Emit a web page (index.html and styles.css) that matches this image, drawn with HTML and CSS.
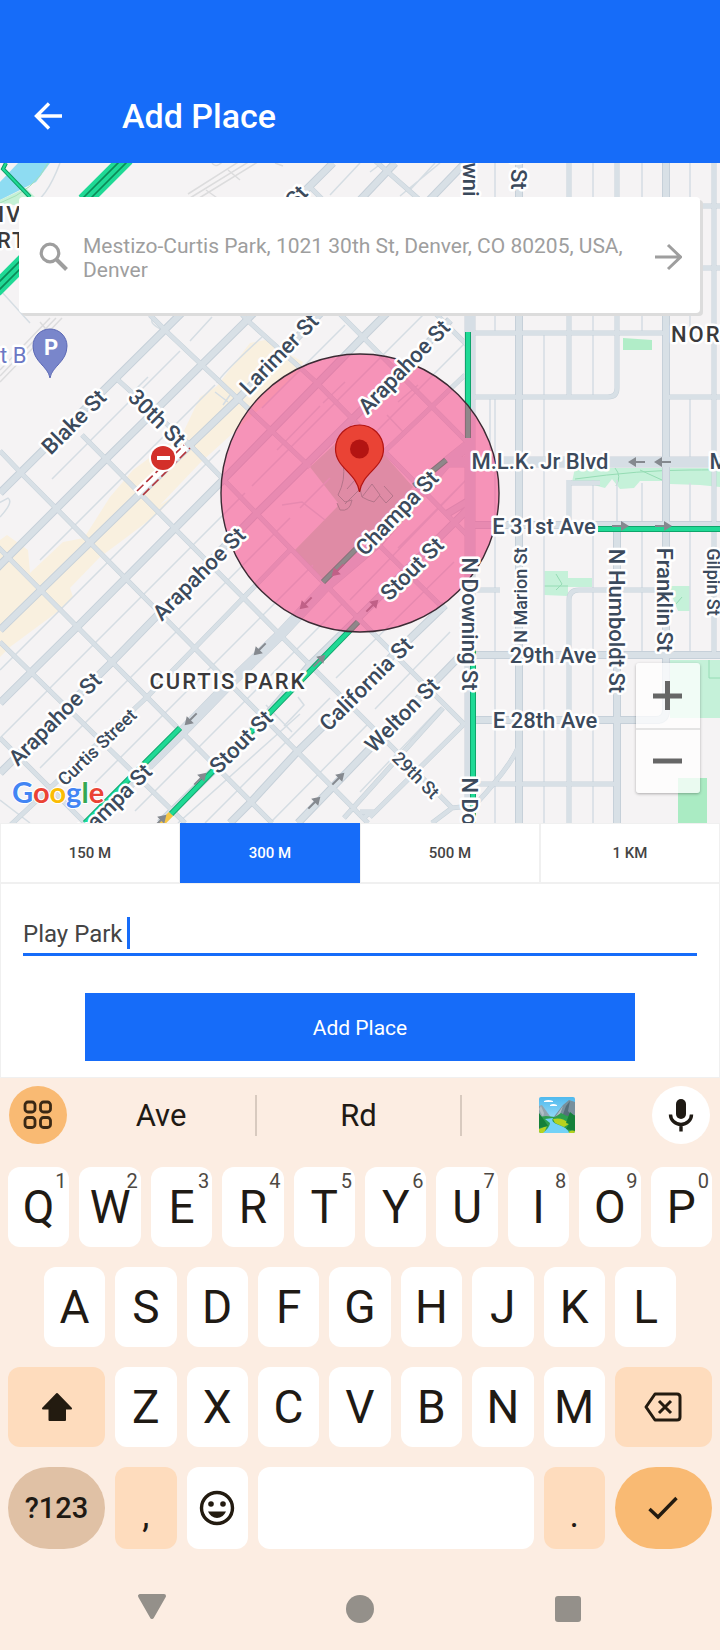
FILE: index.html
```
<!DOCTYPE html>
<html lang="en">
<head>
    <meta charset="UTF-8">
    <meta name="viewport" content="width=device-width, initial-scale=1.0">
    <title>Add Place</title>
    <link rel="stylesheet" href="styles.css">
</head>
<body>
    <header class="app-bar">
        <button class="icon-button" type="button" aria-label="Back">
            <svg width="28" height="28" viewBox="0 0 28 28" fill="none" stroke="#fff" stroke-width="3.4"><path d="M28 14H3M15 1.5 2.5 14 15 26.5"/></svg>
        </button>
        <h1>Add Place</h1>
    </header>

    <main>
        <section class="map" aria-label="Map">
            <svg class="map-canvas" viewBox="0 163 720 660" preserveAspectRatio="xMidYMid slice">
                <defs>
                    <path id="alleys" d="M52 479 180 351M190 341 212 317M40 560 215 385M217 383 Q220 376 262 337M0 670 220 450M262 408 345 325M0 738 245 493M252 486 432 306M40 768 290 518M300 508 330 478M375 433 467 341M95 783 313 565M350 600 467 479M135 811 345 601M398 548 467 479M178 823 300 714M336 678 454 562M205 823 330 698M375 709 450 632M270 823 367 725M360 792 440 708M-5 505 8 498 Q14 502 0 517M290 720 304 705 298 697M304 705 284 726M266 705 292 732M152 320 Q150 325 167 332M215 392 228 402M223 405 230 395M130 395 148 377M277 450 320 406M323 403 345 382M282 505 302 502 325 520M387 415 405 434M418 385 398 402M495 163V333M495 397V823M544 333V823M593 163V333M593 333V397M593 480V823M642 163V333M642 483V655M690 397V460M690 483V655M690 163V333M490 397V462M617 480V525M569 163V190M60 163 Q46 200 30 205M0 290 30 323M410 190 435 163M400 196 440 163M370 172 382 163M330 195 360 163M0 800 30 823"/>
                    <path id="streets" d="M-10 539 272 823M0 451 23 475 368 823M82 435 310 665 400 755 452 808 480 805M118 380 190 445 358 618 465 725M167 332 310 467M377 543 445 610M150 315 167 332M247 320 317 383 467 535M240 312 247 320M340 314 467 442M310 187 330 207M372 158 422 202M0 642 185 823M0 738 85 823M0 835 147 697 290 550M383 453 465 375M344 818 443 708M370 817 463 725M360 812H370L362 820M452 808 432 823M432 310 467 345M470 333H666M470 397H608Q617 397 617 388V163M668 397H720M666 206H720M666 268H720M470 590H500M569 823V600Q569 590 579 590H665M470 784H617M569 163V397M569 480V525M714 163V655M519 745Q512 765 475 805M570 483H600"/>
                    <path id="avenues" d="M0 493 333 163M-10 575 8 557 105 460 247 320 395 163M0 630 190 445 237 400 465 163M0 703 77 627 223 480 363 337 388 312M0 773 112 662 255 515 400 372 450 320M160 823 216 768 265 717 310 665 358 618 467 510M230 823 251 802 297 752 345 705 393 655 445 605M298 823 380 738 460 656M519 163V823M617 530V823M666 163V710Q666 720 656 720M470 525H720M470 655H720M470 720H660M445 515 470 500"/>
                    <path id="highways" d="M90 823 182 732 230 683 280 635 325 587 377 543 447 462 467 446M470 163V823M445 462H720"/>
                    <g id="one-way" fill="#85898f"><path d="M-8-1H1V-5L9 0 1 5V1H-8Z"/></g>
                </defs>

                <rect x="0" y="163" width="720" height="660" fill="#f5f3f4"/>

                <!-- blocks, river and parks -->
                <path fill="#f9f0df" d="M250 343 265 340 303 362 300 372 243 424 200 463 160 505 172 497 160 512 123 540 100 557 70 588 73 597 60 610 10 647 0 657V540L7 535 28 550 30 573 63 542 84 538 110 497 133 470 183 433 200 397 217 386Z"/>
                <path fill="#8edcf2" d="M0 182 18 163H50L36 182 0 200Z"/>
                <path fill="#c5f1d6" d="M0 200 26 188 35 197 20 206 0 203Z"/>
                <path fill="none" stroke="#a5dfb9" d="M0 203Q35 190 48 163"/>
                <g fill="#c5f1d9">
                    <path fill="#b1edc8" d="M623 338 652 340V350H623Z"/>
                    <path d="M575 468H720V487L700 485 670 484V481H640L634 488 620 489 612 479 605 488 590 484 572 482Z"/>
                    <path d="M544 571H568V578H592V587H568V596L544 595Z"/>
                    <path d="M668 586H690V611H678Z"/>
                    <path d="M670 660H720V718H670Z"/>
                    <path fill="#aaebc3" d="M678 778H707V823H678Z"/>
                </g>
                <path fill="none" stroke="#95dcb4" d="M615 468Q622 476 616 486M575 479Q640 470 690 470T720 467M640 470 662 480M556 574 562 584 556 590M544 586H568M709 660V678H720M676 604 682 597"/>
                <path fill="#c4e2cd" d="M350 430 310 467 338 503 337 507 295 550 323 582 413 487 382 452Z"/>

                <!-- rail yard -->
                <g fill="none" stroke="#dcdcdd" stroke-width="1.5">
                    <path d="M190 198 268 150M196 200 274 152M188 194 262 147M0 370 50 318M0 376 56 318M0 382 62 318M206 190 220 200M228 170 240 180M20 345 28 354M40 322 50 334M212 163Q216 170 226 158M275 163 283 166"/>
                </g>

                <!-- roads: casing first, then fill -->
                <g class="roads">
                    <use href="#alleys" class="alley"/>
                    <use href="#streets" class="street-casing"/>
                    <use href="#avenues" class="avenue-casing"/>
                    <use href="#highways" class="highway-casing"/>
                    <use href="#streets" class="street"/>
                    <use href="#avenues" class="avenue"/>
                    <use href="#highways" class="highway"/>
                </g>

                <!-- traffic -->
                <g class="traffic">
                    <path class="traffic-edge" d="M468 332V438M180 728 85 823M171 814 358 622M473 640V823M598 529H720M323 582 356 549M414 486 446 460"/>
                    <path class="traffic-flow" d="M468 332V438M180 728 85 823M171 814 358 622M473 640V823M598 529H720M323 582 356 549M414 486 446 460"/>
                    <path stroke="#f7c643" stroke-width="6" d="M171 814 160 825"/>
                    <path stroke="#0b8a58" stroke-width="13" d="M127 158 84 201M25 260-5 290"/>
                    <path stroke="#1fd995" stroke-width="4" d="M123 154 80 197M131 162 88 205M21 256-9 286M29 264-1 294"/>
                    <path stroke="#1fd995" stroke-width="4" d="M127 158 84 201M25 260-5 290"/>
                    <path stroke="#0b9c63" stroke-width="4" d="M6 163 3 169 30 197"/>
                    <path stroke="#1fd995" stroke-width="2" d="M6 163 3 169 30 197"/>
                </g>
                <path fill="none" stroke="#fff" stroke-width="8" d="M136 493 186 446"/>
                <path fill="none" stroke="#b3333a" stroke-width="1.6" stroke-dasharray="9 4" d="M137 491 184 445M143 495 190 448"/>
                <use href="#one-way" transform="translate(637 462) rotate(180)"/>
                <use href="#one-way" transform="translate(663 462) rotate(180)"/>
                <use href="#one-way" transform="translate(620 526)"/>
                <use href="#one-way" transform="translate(663 526)"/>
                <use href="#one-way" transform="translate(338 570) rotate(135)"/>
                <use href="#one-way" transform="translate(306 603) rotate(135)"/>
                <use href="#one-way" transform="translate(260 649) rotate(135)"/>
                <use href="#one-way" transform="translate(191 719) rotate(135)"/>
                <use href="#one-way" transform="translate(372 606) rotate(-45)"/>
                <use href="#one-way" transform="translate(319 661) rotate(-45)"/>
                <use href="#one-way" transform="translate(200 779) rotate(-45)"/>
                <use href="#one-way" transform="translate(160 821) rotate(-45)"/>
                <use href="#one-way" transform="translate(338 779) rotate(-45)"/>
                <use href="#one-way" transform="translate(314 803) rotate(-45)"/>

                <!-- selected radius -->
                <circle cx="360" cy="493" r="139" fill="#f73b80" fill-opacity=".52" stroke="#3b2a33" stroke-width="1.4"/>
                <path fill="none" stroke="#b5748a" d="M343 463Q346 480 338 495L345 502 352 500Q350 512 340 510L337 503M345 504 360 489 362 497 372 484 380 495 374 502 368 500 362 497M384 486 393 496 386 503 380 496M347 489 362 472"/>

                <g class="labels">
                    <text class="street-name" transform="translate(74 422) rotate(-45)">Blake St</text>
                    <text class="street-name" transform="translate(157 418) rotate(45)">30th St</text>
                    <text class="street-name" transform="translate(279 354) rotate(-46)">Larimer St</text>
                    <text class="street-name" transform="translate(404 367) rotate(-46)">Arapahoe St</text>
                    <text class="street-name" transform="translate(397 513) rotate(-46)">Champa St</text>
                    <text class="street-name" transform="translate(412 569) rotate(-45)">Stout St</text>
                    <text class="street-name" transform="translate(199 574) rotate(-45)">Arapahoe St</text>
                    <text class="street-name" transform="translate(55 719) rotate(-45)">Arapahoe St</text>
                    <text class="street-name" transform="translate(110 806) rotate(-45)">Champa St</text>
                    <text class="street-name" transform="translate(241 742) rotate(-45)">Stout St</text>
                    <text class="street-name" transform="translate(366 684) rotate(-45)">California St</text>
                    <text class="street-name" transform="translate(402 715) rotate(-45)">Welton St</text>
                    <text class="street-name" transform="translate(540 461)">M.L.K. Jr Blvd</text>
                    <text class="street-name" transform="translate(544 526)">E 31st Ave</text>
                    <text class="street-name" transform="translate(553 655)">29th Ave</text>
                    <text class="street-name" transform="translate(545 720)">E 28th Ave</text>
                    <text class="street-name" transform="translate(469 624) rotate(90)">N Downing St</text>
                    <text class="street-name" transform="translate(469 844) rotate(90)">N Downing St</text>
                    <text class="street-name" transform="translate(470 181) rotate(90)">N Downing St</text>
                    <text class="street-name" transform="translate(518 142) rotate(90)">Marion St</text>
                    <text class="street-name" transform="translate(271 223) rotate(-46)">Walnut St</text>
                    <text class="street-name" transform="translate(616 621) rotate(90)">N Humboldt St</text>
                    <text class="street-name" transform="translate(664 600) rotate(90)">Franklin St</text>
                    <text class="street-name" transform="translate(719 461)">M</text>
                    <text class="side-street" transform="translate(97 747) rotate(-44)">Curtis Street</text>
                    <text class="side-street" transform="translate(416 775) rotate(45)">29th St</text>
                    <text class="side-street" transform="translate(520 595) rotate(-90)">N Marion St</text>
                    <text class="side-street" transform="translate(713 582) rotate(90)">Gilpin St</text>
                    <text class="district" x="228" y="681">CURTIS PARK</text>
                    <text class="district start" x="671" y="334">NORTH</text>
                    <text class="district start" x="-2" y="214">IV</text>
                    <text class="district start" x="-3" y="240">RT</text>
                    <text class="lot" x="0" y="355">t B</text>
                </g>

                <!-- parking lot and road closure -->
                <path fill="#7986cb" stroke="#5c69b5" d="M50 378C48 366 33 362 33 346A17 17 0 0 1 67 346C67 362 52 366 50 378Z"/>
                <text class="parking" x="51" y="347">P</text>
                <circle cx="163" cy="458" r="14" fill="#fff"/>
                <circle cx="163" cy="458" r="12" fill="#d3302a"/>
                <path fill="#fff" d="M157 456H170V460H157Z"/>

                <!-- place marker -->
                <path fill="#ea4335" stroke="#b31412" stroke-width="1.2" d="M359.500 492C357 473 335.500 468 335.500 449A24 24 0 0 1 383.500 449C383.500 468 362 473 359.500 492Z"/>
                <circle cx="359.500" cy="449" r="9.500" fill="#b31412"/>

                <text class="google" x="12" y="803"><tspan fill="#4285f4">G</tspan><tspan fill="#ea4335">o</tspan><tspan fill="#fbbc05">o</tspan><tspan fill="#4285f4">g</tspan><tspan fill="#34a853">l</tspan><tspan fill="#ea4335">e</tspan></text>
            </svg>

            <div class="search-card">
                <svg width="30" height="30" viewBox="0 0 30 30" fill="none" stroke="#9e9e9e"><circle cx="11" cy="11" r="8.800" stroke-width="3.200"/><path stroke-width="4" d="M17 17 27.500 27.500"/></svg>
                <button class="search-text" type="button">Mestizo-Curtis Park, 1021 30th St, Denver, CO 80205, USA, Denver</button>
                <button class="icon-button" type="button" aria-label="Go to place">
                    <svg width="28" height="28" viewBox="0 0 28 28" fill="none" stroke="#9e9e9e" stroke-width="3"><path d="M1 14H26M14 2 26.500 14 14 26"/></svg>
                </button>
            </div>

            <div class="zoom-control">
                <button type="button" aria-label="Zoom in"><svg width="30" height="30" viewBox="0 0 30 30" fill="#666"><path d="M0 12.500H12V0H17V12.500H29V17.500H17V29H12V17.500H0Z"/></svg></button>
                <button type="button" aria-label="Zoom out"><svg width="30" height="30" viewBox="0 0 30 30" fill="#666"><path d="M0 11.500H29V16.500H0Z"/></svg></button>
            </div>
        </section>

        <div class="radius-tabs" role="group" aria-label="Radius">
            <button type="button">150 M</button>
            <button type="button" class="active" aria-pressed="true">300 M</button>
            <button type="button">500 M</button>
            <button type="button">1 KM</button>
        </div>

        <form class="place-form">
            <div class="field">
                <input type="text" id="placeName" value="Play Park" aria-label="Place name" autocomplete="off">
                <span class="caret"></span>
            </div>
            <button class="submit" type="button">Add Place</button>
        </form>
    </main>

    <section class="keyboard" aria-label="Keyboard">
        <div class="suggestions">
            <button class="round menu" type="button" aria-label="Menu">
                <svg width="30" height="30" viewBox="0 0 30 30" fill="none" stroke="#3a2814" stroke-width="2.800"><rect x="2" y="2" width="10" height="10" rx="3"/><rect x="17.500" y="2" width="10" height="10" rx="3"/><rect x="2" y="17.500" width="10" height="10" rx="3"/><rect x="17.500" y="17.500" width="10" height="10" rx="3"/></svg>
            </button>
            <div class="words">
                <button type="button">Ave</button>
                <button type="button">Rd</button>
                <button type="button" aria-label="National park">
                    <svg width="36" height="36" viewBox="0 0 36 36">
                        <defs>
                            <linearGradient id="sky" x2="0" y2="1"><stop stop-color="#4fb9ee"/><stop offset="1" stop-color="#c5effc"/></linearGradient>
                            <clipPath id="frame"><rect width="36" height="36" rx="2"/></clipPath>
                        </defs>
                        <g clip-path="url(#frame)">
                            <path fill="url(#sky)" d="M0 0H36V36H0Z"/>
                            <path fill="#fff" d="M5 4Q9 2 14 4V5H5ZM11 8Q14 6 18 8V9H11Z"/>
                            <path fill="#90a4ae" d="M0 9 3 8 13 22H0Z"/>
                            <path fill="#78909c" d="M14 21 24 8 30 3 36 5V23H14Z"/>
                            <path fill="#546e7a" d="M23 20 27 9 31 4 29 14 34 20Z"/>
                            <path fill="#b0bec5" d="M2 9 5 16 4 20 0 12ZM24 9 20 20 17 19Z"/>
                            <path fill="#2e9e4f" d="M0 20 7 19 16 20 22 16 28 19 36 18V36H0Z"/>
                            <path fill="#b5d21f" d="M14 22Q24 20 30 27L25 30 16 26ZM0 32 8 29 5 36H0ZM27 36 36 32V36Z"/>
                            <path fill="#73d2f7" d="M6 22 14 21Q11 25 20 28T30 36H4Q11 30 11 26Z"/>
                            <path fill="#15803a" d="M0 16 5 23 9 29 0 31ZM31 15 36 19V34L27 32 30 27 27 26Z"/>
                        </g>
                    </svg>
                </button>
            </div>
            <button class="round mic" type="button" aria-label="Voice input">
                <svg width="26" height="34" viewBox="0 0 26 34" fill="none" stroke="#1f1a14"><path stroke-width="10" stroke-linecap="round" d="M13 6V16"/><path stroke-width="3.400" d="M2.500 16.500A10.500 10 0 0 0 23.500 16.500M13 26V33.500"/></svg>
            </button>
        </div>

        <div class="keys">
            <button type="button">Q<sup>1</sup></button>
            <button type="button">W<sup>2</sup></button>
            <button type="button">E<sup>3</sup></button>
            <button type="button">R<sup>4</sup></button>
            <button type="button">T<sup>5</sup></button>
            <button type="button">Y<sup>6</sup></button>
            <button type="button">U<sup>7</sup></button>
            <button type="button">I<sup>8</sup></button>
            <button type="button">O<sup>9</sup></button>
            <button type="button">P<sup>0</sup></button>

            <button type="button" class="indent">A</button>
            <button type="button">S</button>
            <button type="button">D</button>
            <button type="button">F</button>
            <button type="button">G</button>
            <button type="button">H</button>
            <button type="button">J</button>
            <button type="button">K</button>
            <button type="button">L</button>

            <button type="button" class="wide soft first" aria-label="Shift">
                <svg width="32" height="30" viewBox="0 0 32 30" fill="#231b10" stroke="#231b10" stroke-width="2" stroke-linejoin="round"><path d="M16 2 30 16.500H24V28H8.500V16.500H2Z"/></svg>
            </button>
            <button type="button">Z</button>
            <button type="button">X</button>
            <button type="button">C</button>
            <button type="button">V</button>
            <button type="button">B</button>
            <button type="button">N</button>
            <button type="button">M</button>
            <button type="button" class="wide soft" aria-label="Backspace">
                <svg width="38" height="30" viewBox="0 0 38 30" fill="none" stroke="#231b10" stroke-width="3" stroke-linejoin="round"><path d="M11 2H33Q36 2 36 5V25Q36 28 33 28H11L2 15Z"/><path d="M15 9 27 21M27 9 15 21"/></svg>
            </button>

            <button type="button" class="wide pill symbols">?123</button>
            <button type="button" class="soft mark">,</button>
            <button type="button" aria-label="Emoji">
                <svg width="36" height="36" viewBox="0 0 36 36"><circle cx="18" cy="18" r="15.500" fill="none" stroke="#231b10" stroke-width="3.400"/><circle cx="12" cy="14" r="2.800" fill="#231b10"/><circle cx="24" cy="14" r="2.800" fill="#231b10"/><path fill="#231b10" d="M9 21.500H27Q24 28 18 28T9 21.500Z"/></svg>
            </button>
            <button type="button" class="space" aria-label="Space"></button>
            <button type="button" class="soft mark">.</button>
            <button type="button" class="wide pill done" aria-label="Done">
                <svg width="30" height="24" viewBox="0 0 30 24" fill="none" stroke="#231b10" stroke-width="3.400"><path d="M1.500 13 10 21 28.500 2"/></svg>
            </button>
        </div>

        <nav class="system-nav" aria-label="System">
            <button type="button" aria-label="Back"><svg width="30" height="34" viewBox="0 0 30 34" fill="#94908a" stroke="#94908a" stroke-width="4" stroke-linejoin="round"><path d="M3 2H27L15 23Z"/></svg></button>
            <button type="button" aria-label="Home"><svg width="28" height="28" viewBox="0 0 28 28" fill="#94908a"><circle cx="14" cy="14" r="14"/></svg></button>
            <button type="button" aria-label="Recent apps"><svg width="26" height="26" viewBox="0 0 26 26" fill="#94908a"><rect width="26" height="26" rx="3"/></svg></button>
        </nav>
    </section>
</body>
</html>
```
FILE: styles.css
```
:root {
    --primary: #166cf9;
    --key-text: #1f1a14;
    --keyboard: #fcede2;
    --soft-key: #fedcbd;
    --accent-key: #f9ba73;
    --line: #f0f0f0;
}

* {
    box-sizing: border-box;
}

body {
    margin: 0;
    background: #fff;
    font-family: Roboto, "Liberation Sans", sans-serif;
    color: #444;
}

button {
    margin: 0;
    padding: 0;
    border: none;
    background: none;
    font: inherit;
    color: inherit;
}

svg {
    display: block;
}

.app-bar {
    display: flex;
    align-items: center;
    gap: 60px;
    height: 163px;
    padding: 69px 34px 0;
    background: var(--primary);
    color: #fff;
}

.app-bar h1 {
    margin: 0;
    font-size: 34px;
    font-weight: 500;
}

.map {
    position: relative;
    height: 660px;
    padding: 34px 20px 0 19px;
}

.map-canvas {
    position: absolute;
    top: 0;
    left: 0;
    width: 100%;
    height: 100%;
}

.roads use,
.traffic {
    fill: none;
}

.alley {
    stroke: #d5dde3;
    stroke-width: 1.5px;
}

.street-casing {
    stroke: #c6d1d9;
    stroke-width: 5px;
}

.street {
    stroke: #d8e0e6;
    stroke-width: 4px;
}

.avenue-casing {
    stroke: #c6d0d9;
    stroke-width: 8px;
}

.avenue {
    stroke: #d8e0e6;
    stroke-width: 6px;
}

.highway-casing {
    stroke: #c9d2da;
    stroke-width: 11px;
}

.highway {
    stroke: #d6dee5;
    stroke-width: 10px;
}

.traffic-edge {
    stroke: #0ea56b;
    stroke-width: 6px;
}

.traffic-flow {
    stroke: #1fd995;
    stroke-width: 4px;
}

.labels text {
    dominant-baseline: central;
    text-anchor: middle;
    paint-order: stroke;
    stroke: #fff;
    stroke-width: 5px;
    stroke-linejoin: round;
    fill: #3b4a5c;
}

.street-name {
    font-size: 22px;
    font-weight: 500;
}

.side-street {
    font-size: 18px;
    font-weight: 500;
}

.labels .district {
    font-size: 22px;
    font-weight: 500;
    letter-spacing: 2px;
    fill: #3a3a3c;
}

.labels .start,
.labels .lot {
    text-anchor: start;
}

.labels .lot {
    font-size: 22px;
    fill: #6c78c4;
}

.parking {
    font-size: 22px;
    font-weight: 700;
    fill: #fff;
    text-anchor: middle;
    dominant-baseline: central;
}

.google {
    font-family: Lato, Roboto, sans-serif;
    font-size: 29px;
    font-weight: 700;
    paint-order: stroke;
    stroke: #fff;
    stroke-width: 2px;
}

.search-card {
    position: relative;
    display: flex;
    align-items: center;
    gap: 14px;
    height: 116px;
    padding: 4px 18px 0 20px;
    border-radius: 4px;
    background: #fff;
    box-shadow: 3px 3px 0 #dcdcdc;
}

.search-card svg {
    flex: none;
}

.search-text {
    flex: 1;
    padding-top: 2px;
    font-size: 21px;
    line-height: 24px;
    text-align: left;
    color: #9e9e9e;
}

.zoom-control {
    position: absolute;
    right: 20px;
    bottom: 30px;
    width: 64px;
    border-radius: 3px;
    background: rgba(255, 255, 255, 0.75);
    box-shadow: 0 1px 3px rgba(0, 0, 0, 0.3);
}

.zoom-control button {
    display: grid;
    place-items: center;
    width: 100%;
    height: 65px;
}

.zoom-control button + button {
    border-top: 2px solid #e4e4e4;
}

.radius-tabs {
    display: grid;
    grid-template-columns: repeat(4, 1fr);
}

.radius-tabs button {
    height: 60px;
    border: 1px solid var(--line);
    font-size: 15px;
    font-weight: 500;
}

.radius-tabs .active {
    border-color: var(--primary);
    background: var(--primary);
    color: #fff;
}

.place-form {
    padding: 30px 22px 16px;
    border: 1px solid var(--line);
}

.field {
    position: relative;
}

.field input {
    display: block;
    width: 100%;
    height: 42px;
    padding: 0;
    border: none;
    border-bottom: 3px solid var(--primary);
    outline: none;
    background: none;
    font-family: inherit;
    font-size: 24px;
    color: #444;
}

.caret {
    position: absolute;
    top: 3px;
    left: 104px;
    width: 3px;
    height: 32px;
    background: var(--primary);
}

.submit {
    display: block;
    width: calc(100% - 124px);
    height: 68px;
    margin: 37px auto 0;
    padding-top: 2px;
    background: var(--primary);
    font-size: 21px;
    color: #fff;
}

.keyboard {
    background: var(--keyboard);
    color: var(--key-text);
}

.suggestions {
    display: flex;
    align-items: center;
    padding: 8px 10px 23px 9px;
}

.round {
    display: grid;
    place-items: center;
    width: 58px;
    height: 58px;
    border-radius: 50%;
    background: #fff;
}

.round.menu {
    background: var(--accent-key);
}

.words {
    display: grid;
    flex: 1;
    grid-template-columns: 188px 1fr 192px;
    font-size: 31px;
}

.words button {
    display: grid;
    place-items: center;
    height: 41px;
}

.words button + button {
    border-left: 2px solid #d8cabf;
}

.keys {
    display: grid;
    grid-template-columns: repeat(20, 1fr);
    grid-template-rows: 80px 80px 80px 82px;
    gap: 20px 10px;
    padding: 0 8px;
}

.keys button {
    position: relative;
    display: grid;
    grid-column: span 2;
    place-items: center;
    border-radius: 12px;
    background: #fff;
    font-size: 46px;
    line-height: 54px;
}

.keys sup {
    position: absolute;
    top: 4px;
    right: 3px;
    font-size: 20px;
    line-height: 20px;
    color: #4d4842;
}

.keys .indent {
    grid-column: 2 / span 2;
}

.keys .wide {
    grid-column: span 3;
}

.keys .first {
    grid-column: 1 / span 3;
}

.keys .space {
    grid-column: span 8;
}

.keys .soft {
    background: var(--soft-key);
}

.keys .mark {
    align-items: end;
    padding-bottom: 14px;
    font-size: 36px;
    line-height: 40px;
}

.keys .pill {
    border-radius: 41px;
}

.keys .symbols {
    background: #e0c1a5;
    font-size: 29px;
    font-weight: 500;
}

.keys .done {
    background: var(--accent-key);
}

.system-nav {
    display: grid;
    grid-template-columns: repeat(3, 1fr);
    padding: 45px 48px 27px;
}

.system-nav button {
    display: grid;
    place-items: center;
    height: 30px;
}
```
